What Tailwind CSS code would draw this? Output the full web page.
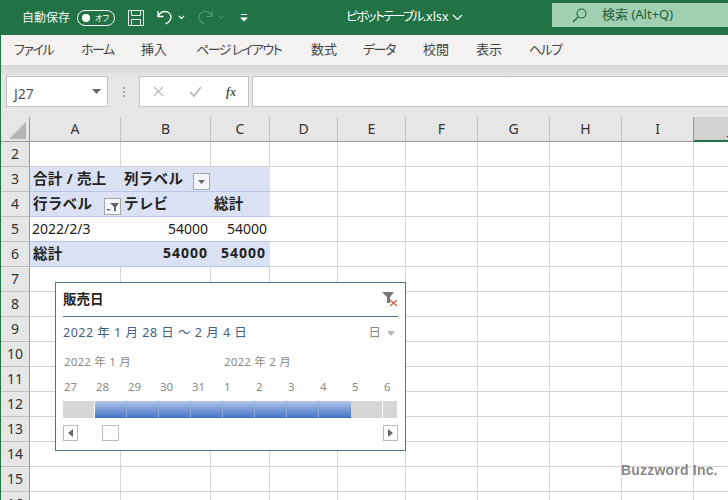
<!DOCTYPE html>
<html lang="ja">
<head>
  <meta charset="UTF-8" />
  <title>ピボットテーブル.xlsx</title>
  <script src="https://cdn.jsdelivr.net/npm/@tailwindcss/browser@4"></script>
</head>
<body class="w-[728px] h-[500px] overflow-hidden bg-white font-['Noto_Sans','Noto_Sans_CJK_JP',sans-serif]">
<div class="relative w-[728px] h-[500px] overflow-hidden border-l border-[#217346]">

  <!-- title bar -->
  <div class="h-[35px] bg-[#217346] flex items-center text-white text-[12px]">
    <span class="ml-[21px] w-[48px] whitespace-nowrap text-[#f2f7f4]">自動保存</span>
    <div class="ml-[7px] w-[38px] h-[16px] rounded-full border border-white flex items-center justify-between pl-[4px] pr-[5px]">
      <span class="w-[8px] h-[8px] rounded-full bg-white"></span>
      <span class="text-[8px] leading-none [font-feature-settings:'palt']">オフ</span>
    </div>
    <svg class="ml-[13px]" width="16" height="16" viewBox="0 0 16 16" fill="none" stroke="#e8f1ec" stroke-width="1"><path d="M.5.5h15v15H.5zM3.5.5v5h9v-5M3.5 15.5v-6h9v6"/></svg>
    <svg class="ml-[13px]" width="16" height="16" viewBox="0 0 16 16" fill="none" stroke="#fff" stroke-width="1.3"><path d="M1 1v5.5h5.5M1.500 6C3 2.500 5.500 1.500 8 1.500c3.500 0 6 2.500 6 5.500 0 3-2.500 5.500-5.500 7"/></svg>
    <svg class="ml-[5px]" width="7" height="5" viewBox="0 0 7 5" fill="none" stroke="#fff" stroke-width="1.2"><path d="M1 1l2.500 2.500L6 1"/></svg>
    <svg class="ml-[12px]" width="16" height="16" viewBox="0 0 16 16" fill="none" stroke="#4f9a72" stroke-width="1.2"><path d="M15 1v5.500H9.500M14.500 6C13 2.500 10.500 1.500 8 1.500c-3.500 0-6 2.500-6 5.500 0 3 2.500 5.500 5.500 7"/></svg>
    <svg class="ml-[5px]" width="6" height="5" viewBox="0 0 7 5" fill="none" stroke="#4f9a72" stroke-width="1.2"><path d="M1 1l2.500 2.500L6 1"/></svg>
    <svg class="ml-[16px]" width="8" height="8" viewBox="0 0 8 8" fill="#fff"><path d="M1 0h6v1H1zM0 3.500h8L4 7.500z"/></svg>
    <span class="ml-[98px] w-[103px] whitespace-nowrap text-[12.500px] [font-feature-settings:'palt']"><span class="tracking-[-1.500px]">ピボットテーブル</span>.xlsx</span>
    <svg class="ml-[3px]" width="11" height="7" viewBox="0 0 11 7" fill="none" stroke="#fff" stroke-width="1.200"><path d="M1 1l4.500 4.500L10 1"/></svg>
    <div class="ml-[89px] w-[176px] h-[24px] -mt-[5px] bg-[#a0cfb1] flex items-center text-[#1f5c3d]">
      <svg class="ml-[20px]" width="15" height="15" viewBox="0 0 15 15" fill="none" stroke="#1f5c3d" stroke-width="1.100"><circle cx="9.500" cy="5.500" r="4.500"/><path d="M6 9l-5 5"/></svg>
      <span class="ml-[15px] whitespace-nowrap text-[13px]">検索 (Alt+Q)</span>
    </div>
  </div>

  <!-- ribbon tabs -->
  <div class="h-[30px] bg-[#f3f2f1] flex items-center pl-[13px] text-[13px] text-[#444] whitespace-nowrap [font-feature-settings:'palt']">
    <span class="w-[67px] tracking-[-1.500px]">ファイル</span>
    <span class="w-[60px] tracking-[-1.500px]">ホーム</span>
    <span class="w-[55px]">挿入</span>
    <span class="w-[115px] tracking-[-1.500px]">ページ レイアウト</span>
    <span class="w-[52px]">数式</span>
    <span class="w-[60px] tracking-[-1.500px]">データ</span>
    <span class="w-[53px]">校閲</span>
    <span class="w-[53px]">表示</span>
    <span class="tracking-[-1.500px]">ヘルプ</span>
  </div>

  <!-- formula bar -->
  <div class="h-[52px] bg-gradient-to-b from-[#d4d4d4] via-[#e6e6e6] via-20% to-[#e6e6e6] flex pt-[11px] pb-[10px]">
    <div class="ml-[5px] w-[102px] bg-white border border-[#c6c6c6] flex items-center justify-between pl-[7px] pr-[6px] text-[14px] text-[#555]">
      <span class="pt-[3px]">J27</span>
      <svg width="9" height="5" viewBox="0 0 9 5" fill="#666"><path d="M0 0h9L4.500 5z"/></svg>
    </div>
    <div class="w-[31px] flex flex-col items-center justify-center gap-[2px]">
      <span class="w-[2px] h-[2px] bg-[#aaa]"></span>
      <span class="w-[2px] h-[2px] bg-[#aaa]"></span>
      <span class="w-[2px] h-[2px] bg-[#aaa]"></span>
    </div>
    <div class="w-[110px] bg-white border border-[#c6c6c6] flex items-center justify-between pl-[13px] pr-[12px]">
      <svg width="11" height="11" viewBox="0 0 11 11" stroke="#bbb" stroke-width="1.300"><path d="M1 1l9 9M10 1l-9 9"/></svg>
      <svg width="13" height="11" viewBox="0 0 13 11" fill="none" stroke="#bbb" stroke-width="1.800"><path d="M1 6l4 4 7-9"/></svg>
      <span class="font-['Liberation_Serif',serif] italic font-bold text-[12px] text-[#555] leading-none">fx</span>
    </div>
    <div class="ml-[3px] flex-1 bg-white border-y border-l border-[#c6c6c6]"></div>
  </div>

  <!-- sheet -->
  <div id="sheet" class="grid grid-cols-[29px_91px_90px_59px_68px_68px_72px_72px_72px_72px_72px] auto-rows-[25px] text-[14px] text-[#222] leading-none">
    <div class="bg-[#e6e6e6] border-r border-b border-[#9a9a9a] relative">
      <svg class="absolute right-[3px] bottom-[2px]" width="17" height="17" viewBox="0 0 17 17" fill="#b5b5b5"><path d="M17 0v17H0z"/></svg>
    </div>
    <div class="bg-[#e6e6e6] border-r border-b border-r-[#c0c0c0] border-b-[#9a9a9a] flex items-center justify-center text-[#333]">A</div>
    <div class="bg-[#e6e6e6] border-r border-b border-r-[#c0c0c0] border-b-[#9a9a9a] flex items-center justify-center text-[#333]">B</div>
    <div class="bg-[#e6e6e6] border-r border-b border-r-[#c0c0c0] border-b-[#9a9a9a] flex items-center justify-center text-[#333]">C</div>
    <div class="bg-[#e6e6e6] border-r border-b border-r-[#c0c0c0] border-b-[#9a9a9a] flex items-center justify-center text-[#333]">D</div>
    <div class="bg-[#e6e6e6] border-r border-b border-r-[#c0c0c0] border-b-[#9a9a9a] flex items-center justify-center text-[#333]">E</div>
    <div class="bg-[#e6e6e6] border-r border-b border-r-[#c0c0c0] border-b-[#9a9a9a] flex items-center justify-center text-[#333]">F</div>
    <div class="bg-[#e6e6e6] border-r border-b border-r-[#c0c0c0] border-b-[#9a9a9a] flex items-center justify-center text-[#333]">G</div>
    <div class="bg-[#e6e6e6] border-r border-b border-r-[#c0c0c0] border-b-[#9a9a9a] flex items-center justify-center text-[#333]">H</div>
    <div class="bg-[#e6e6e6] border-r border-b border-r-[#9a9a9a] border-b-[#9a9a9a] flex items-center justify-center text-[#333]">I</div>
    <div class="bg-[#d2d2d2] border-b-2 border-[#217346] flex items-center justify-center text-[#333]">J</div>
  </div>

  <!-- slicer, floats over the sheet -->
  <div class="absolute left-[54px] top-[282px] w-[351px] h-[169px] bg-white border border-[#4e7390] px-[7px]">
    <div class="h-[34px] border-b border-[#4e7390] flex items-center justify-between">
      <span class="font-bold text-[13.500px] text-[#222]">販売日</span>
      <svg class="mt-[-1px]" width="16" height="16" viewBox="0 0 16 16"><path d="M0 1h12L8 6v6H5V6z" fill="#777"/><path d="M8 9l7 6M15 9l-7 6" stroke="#c9583a" stroke-width="1.100"/></svg>
    </div>
    <div class="h-[31px] pt-[1px] flex items-center justify-between text-[12.500px] text-[#44607f]">
      <span class="whitespace-pre tracking-[.5px]">2022 年 1 月 28 日 ～ 2 月 4 日</span>
      <span class="flex items-center gap-[6px] text-[#8a8a8a] pr-[3px]">日
        <svg width="8" height="5" viewBox="0 0 8 5" fill="#b5b5b5"><path d="M0 0h8L4 5z"/></svg>
      </span>
    </div>
    <div class="h-[26px] pt-[1px] flex items-center text-[11.500px] text-[#8a8a8a] tracking-[.2px]">
      <span class="pl-[1px] w-[161px] whitespace-pre">2022 年 1 月</span>
      <span class="whitespace-pre">2022 年 2 月</span>
    </div>
    <div class="h-[26px] flex items-center pl-[1px] text-[11.500px] text-[#8a8a8a]">
      <span class="w-[32px]">27</span>
      <span class="w-[32px]">28</span>
      <span class="w-[32px]">29</span>
      <span class="w-[32px]">30</span>
      <span class="w-[32px]">31</span>
      <span class="w-[32px]">1</span>
      <span class="w-[32px]">2</span>
      <span class="w-[32px]">3</span>
      <span class="w-[32px]">4</span>
      <span class="w-[32px]">5</span>
      <span class="w-[14px]">6</span>
    </div>
    <div class="flex h-[17px] mt-[1px]">
      <span class="w-[32px] bg-[#d6d6d6] border-r border-white"></span>
      <span class="w-[32px] bg-gradient-to-b from-[#b4c6e7] to-[#4472c4] border-r border-[#8eaadb]"></span>
      <span class="w-[32px] bg-gradient-to-b from-[#b4c6e7] to-[#4472c4] border-r border-[#8eaadb]"></span>
      <span class="w-[32px] bg-gradient-to-b from-[#b4c6e7] to-[#4472c4] border-r border-[#8eaadb]"></span>
      <span class="w-[32px] bg-gradient-to-b from-[#b4c6e7] to-[#4472c4] border-r border-[#8eaadb]"></span>
      <span class="w-[32px] bg-gradient-to-b from-[#b4c6e7] to-[#4472c4] border-r border-[#8eaadb]"></span>
      <span class="w-[32px] bg-gradient-to-b from-[#b4c6e7] to-[#4472c4] border-r border-[#8eaadb]"></span>
      <span class="w-[32px] bg-gradient-to-b from-[#b4c6e7] to-[#4472c4] border-r border-[#8eaadb]"></span>
      <span class="w-[32px] bg-gradient-to-b from-[#b4c6e7] to-[#4472c4]"></span>
      <span class="w-[32px] bg-[#d6d6d6] border-r border-white"></span>
      <span class="w-[14px] bg-[#d6d6d6]"></span>
    </div>
    <div class="relative flex items-center justify-between mt-[7px] h-[16px]">
      <span class="w-[15px] h-[16px] border border-[#bdbdbd] flex items-center justify-center">
        <svg width="5" height="8" viewBox="0 0 5 8" fill="#666"><path d="M5 0v8L0 4z"/></svg>
      </span>
      <span class="absolute left-[39px] top-0 w-[17px] h-[16px] border border-[#bdbdbd]"></span>
      <span class="w-[15px] h-[16px] border border-[#bdbdbd] flex items-center justify-center">
        <svg width="5" height="8" viewBox="0 0 5 8" fill="#666"><path d="M0 0v8l5-4z"/></svg>
      </span>
    </div>
  </div>

  <span class="absolute left-[620px] top-[460px] text-[14px] font-bold text-[#555]/70 font-['Liberation_Sans',sans-serif] tracking-[.2px]">Buzzword Inc.</span>
</div>

<script>
  // body cells of the sheet: row -> column -> text / classes
  const sheet = document.getElementById('sheet');
  const pivot = {
    3: ['合計 / 売上', '列ラベル', ''],
    4: ['行ラベル', 'テレビ', '総計'],
    5: ['2022/2/3', '54000', '54000'],
    6: ['総計', '54000', '54000'],
  };
  const dropdown = '<svg width="7" height="4" viewBox="0 0 7 4" fill="#666"><path d="M0 0h7L3.500 4z"/></svg>';
  const filter = '<svg width="13" height="10" viewBox="0 0 13 10" fill="#666"><path d="M4 1h9L10 5v4H8V5zM0 7h5L2.500 9z"/></svg>';

  for (let r = 2; r <= 16; r++) {
    const head = document.createElement('div');
    head.className = 'bg-[#e6e6e6] border-r border-b border-r-[#9a9a9a] border-b-[#c0c0c0] flex items-center justify-center text-[#333]';
    head.textContent = r;
    sheet.appendChild(head);

    for (let c = 0; c < 10; c++) {
      const cell = document.createElement('div');
      cell.className = 'relative border-r border-b border-[#d4d4d4] flex items-center whitespace-nowrap';
      if (pivot[r] && c < 3) {
        const text = pivot[r][c];
        if (r === 5) {
          cell.className = 'relative border-b border-[#b4c6e7] flex items-center whitespace-nowrap';
          cell.className += c === 0 ? ' pl-[2px]' : ' justify-end pr-[3px]';
        } else if (r === 6 && c > 0) {
          cell.className = 'relative bg-[#d9e1f2] border-b border-[#b4c6e7] flex items-center whitespace-nowrap font-bold tracking-[1px] justify-end pb-[2px]';
          cell.className += c === 1 ? ' pr-[3px]' : ' pr-[4px]';
        } else {
          cell.className = 'relative bg-[#d9e1f2] border-b border-[#b4c6e7] flex items-center whitespace-nowrap font-bold text-[14.500px] tracking-[.3px] pl-[3px] pb-[2px]';
        }
        cell.innerHTML = '<span>' + text + '</span>';
        if (r === 3 && c === 1) cell.innerHTML += '<span class="absolute right-[1px] top-[6px] w-[17px] h-[17px] bg-[#f4f6fb] border border-[#a6a6a6] flex items-center justify-center">' + dropdown + '</span>';
        if (r === 4 && c === 0) cell.innerHTML += '<span class="absolute right-[0px] top-[6px] w-[17px] h-[17px] bg-[#f4f6fb] border border-[#a6a6a6] flex items-center justify-center">' + filter + '</span>';
      }
      sheet.appendChild(cell);
    }
  }
</script>
</body>
</html>
